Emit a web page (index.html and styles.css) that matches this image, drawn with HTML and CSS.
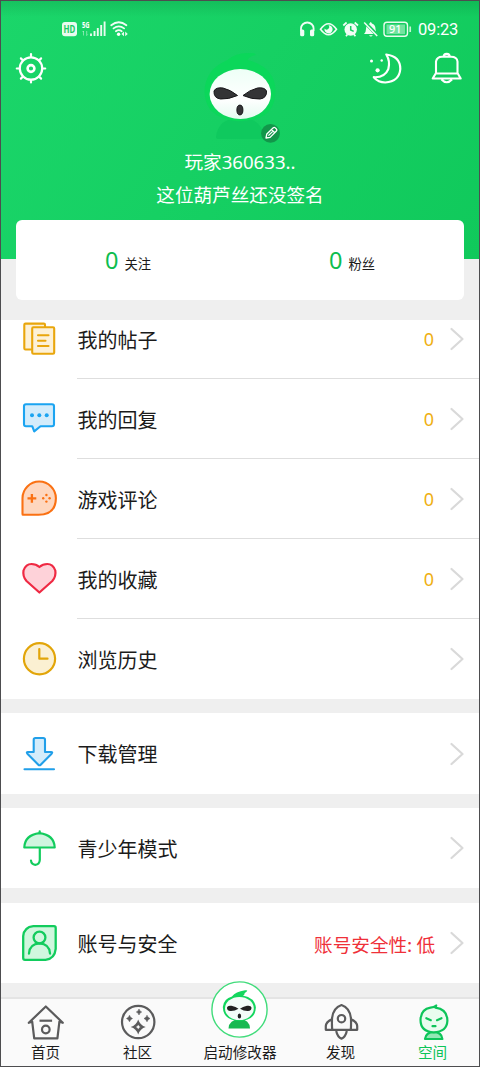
FILE: index.html
```html
<!DOCTYPE html>
<html lang="zh-CN">
<head>
<meta charset="utf-8">
<title>空间</title>
<link rel="stylesheet" href="styles.css">
</head>
<body>
<div class="phone">
  <header class="hero">
    <div class="status">
      <svg class="status-left" width="72" height="22" viewBox="60 18 72 22">
        <rect x="62" y="22" width="15" height="14.300" rx="3" fill="#e9fbef"/>
        <text x="63.600" y="32.800" class="hd" textLength="11.800" lengthAdjust="spacingAndGlyphs">HD</text>
        <text x="82" y="27.600" class="fiveg" textLength="7.600" lengthAdjust="spacingAndGlyphs">5G</text>
        <path d="M83.500 31v4.500m-1-3.500l1-1M86.700 31v4.500l1-1" stroke="#fff" stroke-width=".9" fill="none" opacity=".5"/>
        <path d="M91 33.500V36M94.500 31v5M97.800 28v8M101.200 25v11M104.600 21.500V36" stroke="#e9fbef" stroke-width="1.900" fill="none"/>
        <g fill="none" stroke="#f1fdf5" stroke-width="1.800" stroke-linecap="round"><path d="M111.200 25.200q7.600-6 15.200 0M113.500 28.400q5.300-4 10.600 0M115.900 31.200q2.900-2 5.800 0"/></g>
        <circle cx="118.600" cy="34.200" r="1.700" fill="#fff"/>
        <path d="M124 31.500v4.800l-2.600-2.400zM125.200 31.500v4.800l2.600-2.400z" fill="#e9fbef"/>
      </svg>
      <svg class="status-right" width="116" height="22" viewBox="298 18 116 22">
        <path d="M302 31v-2.500a6.300 6 0 0 1 12.600 0V31" fill="none" stroke="#f1fdf5" stroke-width="1.800"/>
        <rect x="301.100" y="29.500" width="4.200" height="6.800" rx="1.600" fill="#f1fdf5"/><rect x="311" y="29.500" width="4.200" height="6.800" rx="1.600" fill="#f1fdf5"/>
        <path d="M321.500 29.200q8-11 16 0q-8 11-16 0z" fill="none" stroke="#f1fdf5" stroke-width="1.600"/>
        <path d="M329.500 25.200a4.100 4.100 0 1 1-4 3.400a2.400 2.400 0 0 0 4-3.400z" fill="#f1fdf5"/>
        <circle cx="351.700" cy="29.500" r="6.200" fill="#f1fdf5"/>
        <path d="M344.300 25.500l3.300-3M359 25.500l-3.300-3M347 36.300l1.500-2M356.400 36.300l-1.500-2" stroke="#f1fdf5" stroke-width="1.700"/>
        <path d="M351.700 26v4l3 1.400" stroke="#18cf63" stroke-width="1.500" fill="none"/>
        <path d="M365 34q2-2 2-5q0-4.500 3.600-5.500q1.100-3.200 2.300 0q3.600 1 3.600 5.500q0 3 2 5zM370 35.200h3.800q-1.900 2.600-3.800 0z" fill="#f1fdf5"/>
        <path d="M365 21.500l14 14.500" stroke="#18cf63" stroke-width="3.400"/><path d="M365.200 22.500l13 13.500" stroke="#f1fdf5" stroke-width="1.500"/>
        <rect x="385" y="22.300" width="23.500" height="14" rx="3" fill="none" stroke="#e9fbef" stroke-width="1.400"/>
        <rect x="387.500" y="24.500" width="18.500" height="9.600" fill="#73e3a0"/>
        <text x="390" y="33.300" class="battery" textLength="12.500" lengthAdjust="spacingAndGlyphs">91</text>
        <path d="M411.200 26.500v5.500" stroke="#c4f4d6" stroke-width="1.700"/>
      </svg>
      <span class="time">09:23</span>
    </div>
    <div class="topbar">
      <svg width="32" height="34" viewBox="15 51 32 34" fill="none" stroke="#fff" stroke-width="2.200" stroke-linecap="round">
        <circle cx="31" cy="68.500" r="11.200"/><circle cx="31" cy="68.500" r="3.400" stroke-width="2.600"/>
        <path d="M31 57v-3M31 80v2.500M19.500 68.500h-2.700M42.500 68.500h2.700M23 60.500l-2.100-2.100M39 60.500l2.100-2.100M23 76.500l-2.100 2.100M39 76.500l2.100 2.100"/>
      </svg>
      <svg class="avatar" width="80" height="94" viewBox="200 51 80 94">
        <defs><linearGradient id="face" x1="0" y1="0" x2="0" y2="1"><stop offset="0" stop-color="#edfff6"/><stop offset=".6" stop-color="#fff"/><stop offset="1" stop-color="#e4fbf0"/></linearGradient></defs>
        <path d="M216 137q2-19 24-19t24 19q0 2-3 2h-42q-3 0-3-2z" fill="#0fc95e"/>
        <path d="M204.500 91q1-22 23-31q8-7 20-7q10 0 8 2q-6 1-8 5q27 7 28 30q0 24-20 29q-30 7-45-9q-6-8-6-19z" fill="#0bd75a"/>
        <ellipse cx="240.300" cy="94" rx="30.700" ry="25" fill="url(#face)"/>
        <g fill="#343436" stroke="#171719" stroke-width="1"><path d="M214 91q2-4 9-3q8 2 14.500 7.500q-9 4-17 3.500q-7-1-6.500-8z"/><path d="M266.500 91q-2-4-9-3q-8 2-14.500 7.500q9 4 17 3.500q7-1 6.500-8z"/><ellipse cx="239.900" cy="110" rx="3" ry="4.900"/></g>
        <circle cx="270.500" cy="133.400" r="9.400" fill="#12964a"/>
        <path d="M266 138l.8-4 6.500-6.300q1-.8 2 .2l1.100 1.100q1 1 0 2l-6.300 6.400zM271.600 129.600l3.400 3.400M268.400 135.600l4.600-4.500" fill="none" stroke="#fff" stroke-width="1.300" stroke-linejoin="round"/>
      </svg>
      <div class="actions">
        <svg width="36" height="34" viewBox="368 51 36 34"><path d="M386.300 54.500q14 1.700 14 14.500q-1 12.500-15 13.500q-7 0-11.500-5.300q11 .6 14.500-8q2.200-8-2-14.700z" fill="none" stroke="#fff" stroke-width="2.200" stroke-linejoin="round"/><g fill="#fff"><circle cx="371.500" cy="61" r="1.500"/><circle cx="381.700" cy="60.500" r="1.200"/><circle cx="377.600" cy="70.300" r="2.100"/></g></svg>
        <svg width="34" height="34" viewBox="430 51 34 34" fill="none" stroke="#fff" stroke-width="2.100" stroke-linejoin="round"><path d="M436 73V61.500q1-4.700 6-4.700h9q6 0 6.500 4.700V73l3.200 5.500h-28zM435 73.500h23.500M443.700 56.500q0-2.400 3-2.600q3 .2 3 2.600M441.500 79.500q5.200 5.600 10.500 0"/></svg>
      </div>
    </div>
    <div class="name">玩家360633..</div>
    <div class="sign">这位葫芦丝还没签名</div>
  </header>

  <section class="stats">
    <div class="stat"><b>0</b><span>关注</span></div>
    <div class="stat"><b>0</b><span>粉丝</span></div>
  </section>

  <main>
    <section class="group group-first">
      <a class="row"><svg class="icon" viewBox="20 319 40 40" fill="#fdf1d7" stroke="#e9a60c" stroke-width="2.100" stroke-linejoin="round" stroke-linecap="round"><path d="M31 349.500h-5.500q-1.200 0-1.200-1.200v-23.500q0-1.200 1.200-1.200h18.300q1.200 0 1.200 1.200v2.500"/><rect x="32.200" y="327.300" width="22" height="26.500" rx="1.200"/><path d="M38 335.300h10.500M38 340.700h7.500M38 346h10.500"/></svg><span class="label">我的帖子</span><span class="count">0</span><svg class="chev" viewBox="450 327 16 24"><path d="M452.500 329l11 10-11 10"/></svg></a>
      <a class="row"><svg class="icon" viewBox="20 399 40 40" fill="#d3ecfb" stroke="#1ba4f1" stroke-width="2.100" stroke-linejoin="round"><path d="M26 404.200h26q2 0 2 2v18q0 2-2 2H40.500l-6.300 5.200-2-5.200H26q-2 0-2-2v-18q0-2 2-2z"/><g fill="#1ba4f1" stroke="none"><circle cx="32" cy="415.200" r="2"/><circle cx="39.300" cy="415.200" r="2"/><circle cx="46.700" cy="415.200" r="2"/></g></svg><span class="label">我的回复</span><span class="count">0</span><svg class="chev" viewBox="450 327 16 24"><path d="M452.500 329l11 10-11 10"/></svg></a>
      <a class="row"><svg class="icon" viewBox="20 479 40 40" fill="#fed7bf" stroke="#fa7113" stroke-width="2.100" stroke-linejoin="round"><path d="M23 514.800q-.5 0-.5-.8V498.200a16.700 16.700 0 0 1 33.400 0q-.3 16.600-17.400 16.600z"/><path d="M27.500 498.300h8.800M31.900 494v8.700" stroke-width="2.300"/><g fill="#fa7113" stroke="none"><circle cx="46.400" cy="495" r="1.200"/><circle cx="46.400" cy="501.600" r="1.200"/><circle cx="43.200" cy="498.300" r="1.200"/><circle cx="49.600" cy="498.300" r="1.200"/></g></svg><span class="label">游戏评论</span><span class="count">0</span><svg class="chev" viewBox="450 327 16 24"><path d="M452.500 329l11 10-11 10"/></svg></a>
      <a class="row"><svg class="icon" viewBox="20 559 40 40" fill="#fed2d9" stroke="#ef2943" stroke-width="2.200" stroke-linejoin="round"><path d="M39.400 592.500L26.500 581q-4-4.500-3-10.500q2.300-6.500 8-6.500q4.500 0 7.900 3q3.400-3 7.900-3q5.700 0 8 6.500q1 6-3 10.500z"/></svg><span class="label">我的收藏</span><span class="count">0</span><svg class="chev" viewBox="450 327 16 24"><path d="M452.500 329l11 10-11 10"/></svg></a>
      <a class="row"><svg class="icon" viewBox="20 639 40 40" fill="#fbf0d2" stroke="#e2a509" stroke-width="2.200" stroke-linecap="round"><circle cx="39.500" cy="658.700" r="15.600"/><path d="M39.300 649v9.700h8.200" stroke-linejoin="round"/></svg><span class="label">浏览历史</span><svg class="chev" viewBox="450 327 16 24"><path d="M452.500 329l11 10-11 10"/></svg></a>
    </section>
    <section class="group tall">
      <a class="row"><svg class="icon" viewBox="20 733.500 40 40" fill="#d3ecfb" stroke="#219fe9" stroke-width="2.100" stroke-linejoin="round" stroke-linecap="round"><path d="M35.500 737.500h7.700q1.800 0 1.800 1.800v12.200h6q2 0 .6 1.700l-10.900 11q-1.200 1.200-2.400 0l-10.900-11q-1.300-1.700.6-1.700h5.700v-12.200q0-1.800 1.800-1.800zM24.500 768.700H54"/></svg><span class="label">下载管理</span><svg class="chev" viewBox="450 327 16 24"><path d="M452.500 329l11 10-11 10"/></svg></a>
    </section>
    <section class="group">
      <a class="row"><svg class="icon" viewBox="20 828 40 40" fill="none" stroke="#12cc5d" stroke-width="2.200" stroke-linejoin="round" stroke-linecap="round"><path d="M24.300 847.500q.5-12.500 15.200-14.300q14.700 1.800 15.200 14.300z" fill="#cff5df"/><path d="M39.700 833v-1.700M39.800 848v12q-.3 4.500-4.500 4.800q-4-.4-4.300-4.300"/></svg><span class="label">青少年模式</span><svg class="chev" viewBox="450 327 16 24"><path d="M452.500 329l11 10-11 10"/></svg></a>
    </section>
    <section class="group security">
      <a class="row"><svg class="icon" viewBox="20 923 40 40" fill="#d0f7de" stroke="#12cc5d" stroke-width="2.300" stroke-linejoin="round" stroke-linecap="round"><path d="M33.300 926.200H54q1.700 0 1.700 1.700v21q-1 10-10.200 11H25q-1.800 0-1.800-1.800v-22q1-9 10.100-9.900z"/><circle cx="39.500" cy="937.500" r="5.900"/><path d="M29 953.500q.5-9.500 10.500-10.100q10 .6 10.500 10.100" fill="none"/></svg><span class="label">账号与安全</span><span class="warn">账号安全性: 低</span><svg class="chev" viewBox="450 327 16 24"><path d="M452.500 329l11 10-11 10"/></svg></a>
    </section>
  </main>

  <nav class="tabs">
    <a class="tab"><svg width="40" height="40" viewBox="26 1002 40 40" fill="none" stroke="#5b5b5c" stroke-width="2.200" stroke-linejoin="round"><path d="M28.800 1022.800l17-16.300 17 16.300-3.400-1.200-2 16.700H34.200l-2-16.700z"/><path d="M39.500 1020.700h12.600"/><circle cx="45.800" cy="1029.500" r="3.800"/></svg><span>首页</span></a>
    <a class="tab"><svg width="40" height="40" viewBox="117.500 1002 40 40"><circle cx="137.700" cy="1022" r="16.200" fill="none" stroke="#5b5b5c" stroke-width="2.200"/><g fill="#5b5b5c"><path fill-rule="evenodd" d="M137.700 1019.500q2 6 7.500 7.500q-5.500 1.500-7.500 7.500q-2-6-7.500-7.500q5.500-1.500 7.500-7.500zm0 5.200q-.7 1.700-2.300 2.300q1.600.6 2.300 2.300q.7-1.700 2.300-2.300q-1.600-.6-2.300-2.300z"/><path d="M138.500 1009q.6 2.300 2.700 3q-2.100.7-2.700 3q-.6-2.300-2.700-3q2.100-.7 2.700-3zM129 1015.200q.8 2.600 3 3.300q-2.200.7-3 3.300q-.8-2.600-3-3.300q2.200-.7 3-3.300zM146.500 1015.200q.8 2.600 3 3.300q-2.200.7-3 3.300q-.8-2.600-3-3.300q2.200-.7 3-3.300z" stroke="#5b5b5c" stroke-width=".5"/></g></svg><span>社区</span></a>
    <a class="tab launch"><svg width="60" height="60" viewBox="210 980 60 60"><circle cx="239.500" cy="1009.500" r="27.600" fill="#fff" stroke="#41dc7b" stroke-width="1.400"/><path d="M228.500 1028.500q.5-9 11.500-9.500q9.500.5 10 9.500z" fill="#17b951"/><path d="M222.800 1007q1-8.500 9.200-10.500q3.500-5 13-6.300q3.500-.4 1.500 1.500q-2.500 1-2.300 3.300l-1.500.5q12 2 13.200 12q-.5 13-16.500 13.500q-16-.5-16.600-14z" fill="#13d65e"/><ellipse cx="239.400" cy="1008.500" rx="14.400" ry="11.500" fill="#f3fcf8"/><g fill="#222"><path d="M227 1007.500q.5-2.300 4.500-1.700q4.500.8 7 3q-4 2.400-8 2.200q-3.700-.4-3.500-3.500zM251.500 1007.500q-.5-2.300-4.500-1.700q-4.500.8-7 3q4 2.400 8 2.200q3.700-.4 3.500-3.500z"/><ellipse cx="239.400" cy="1016" rx="1.700" ry="2.500"/></g></svg><span>启动修改器</span></a>
    <a class="tab"><svg width="40" height="40" viewBox="320.500 1002 40 40" fill="none" stroke="#5b5b5c" stroke-width="2.200" stroke-linejoin="round"><path d="M331.800 1029.800q-.5-2-.3-11q1-11 9.500-13.800q8.500 2.800 9.500 13.800q.2 9-.3 11zM331.500 1019q-6 3-6.200 7v3.800h6.300M350.500 1019q6 3 6.200 7v3.800h-6.300M335.700 1031q1.300 6 5.300 7.700q4-1.700 5.300-7.700"/><circle cx="341" cy="1018.700" r="3.700"/></svg><span>发现</span></a>
    <a class="tab active"><svg width="40" height="40" viewBox="412.500 1002 40 40" fill="none" stroke="#0dc459" stroke-width="2.200" stroke-linejoin="round" stroke-linecap="round"><path d="M424.500 1039q1-7 8.700-7.200q8 .2 8.700 7.200z" fill="#92e8b5"/><path d="M430 1007.700q3.500-.2 5.700-2.200l-.8 2.200q12 1.500 12 13q-.5 11-13.700 11.600q-13.200-.6-13.200-12.600q.5-10.500 10-12z" fill="#e9fcef"/><path d="M425.800 1018.200l4.500 2M441 1018.200l-4.500 2M432 1026.200h3"/></svg><span>空间</span></a>
  </nav>
</div>
</body>
</html>
```
FILE: styles.css
```css
* { box-sizing: border-box; }
body {
  margin: 0;
  font-family: "Noto Sans CJK SC", "Noto Sans", sans-serif;
  font-weight: 400;
  color: #1b1b1b;
}
svg { display: block; flex: none; }
.phone {
  width: 480px;
  height: 1067px;
  border: 1px solid #4d4d4f;
  background: #efefef;
  display: flex;
  flex-direction: column;
  overflow: hidden;
}
.hero {
  height: 258px;
  flex: none;
  background: linear-gradient(180deg, rgba(0, 70, 30, .14), rgba(0, 70, 30, 0) 16px), linear-gradient(125deg, #1bd66a, #10c95b);
  color: #fff;
}
.status {
  display: flex;
  align-items: center;
  height: 50px;
  padding: 6px 20px 0 59px;
}
.status-right { margin-left: auto; }
.time {
  width: 41px;
  margin-left: 5px;
  padding-top: 2px;
  font: 400 16.500px/22px Roboto, sans-serif;
  letter-spacing: -.2px;
}
.hd, .fiveg { font-family: "Noto Sans", sans-serif; font-weight: 700; }
.battery { font-family: "Noto Sans", sans-serif; font-weight: 500; }
.hd { font-size: 10px; fill: #19ca62; }
.fiveg { font-size: 8px; fill: #fff; }
.battery { font-size: 11px; fill: #fff; }
.topbar {
  display: grid;
  grid-template-columns: 1fr 80px 1fr;
  height: 94px;
  padding: 0 15px 0 14px;
}
.actions { display: flex; justify-content: flex-end; gap: 26px; }
.name, .sign {
  text-align: center;
  font-size: 18.600px;
  line-height: 32px;
}
.name { padding-top: 1px; font-family: "Noto Sans", "Noto Sans CJK SC", sans-serif; }
.stats {
  display: flex;
  flex: none;
  height: 80px;
  margin: -39px 15px 20px;
  border-radius: 6px;
  background: #fff;
}
.stat {
  flex: 1;
  display: flex;
  justify-content: center;
  align-items: baseline;
  gap: 6px;
  padding-top: 22px;
}
.stat b {
  font: 400 23.500px/36px "Noto Sans", sans-serif;
  color: #0dbd4f;
}
.stat span { font-size: 13.300px; }
main { height: 677px; flex: none; }
.group { height: 80px; margin-bottom: 15px; background: #fff; overflow: hidden; }
.group-first { height: 379px; margin-bottom: 14px; }
.group-first .row:first-child { margin-top: -21px; }
.group.tall { height: 81px; margin-bottom: 14px; }
.group.tall .row { height: 81px; }
.group.security { margin-bottom: 14px; }
.row {
  display: flex;
  align-items: center;
  position: relative;
  height: 80px;
  padding: 0 14px 0 19px;
}
.group-first .row:not(:last-child)::after {
  content: "";
  position: absolute;
  left: 76px;
  right: 0;
  bottom: 0;
  border-bottom: 1px solid #dedede;
}
.icon { width: 40px; height: 40px; }
.label { margin-left: 17.500px; padding-top: 1px; flex: 1; font-size: 20px; line-height: 30px; }
.count {
  width: 12px;
  text-align: center;
  font: 400 18px/24px "Noto Sans", sans-serif;
  color: #efb012;
}
.warn { padding-top: 1px; font-size: 18.600px; color: #ef3039; }
.chev {
  width: 16px;
  height: 24px;
  margin-left: 14px;
  fill: none;
  stroke: #d9d9d9;
  stroke-width: 2.200px;
  stroke-linecap: round;
  stroke-linejoin: round;
}
.tabs {
  flex: none;
  height: 70px;
  display: grid;
  grid-template-columns: 89px 95px 110px 91px 93px;
  border-top: 2px solid #e4e4e4;
  background: #fafafa;
}
.tab {
  display: flex;
  flex-direction: column;
  align-items: center;
  padding-top: 3px;
  font-size: 14.600px;
  line-height: 20px;
}
.launch { padding-top: 0; }
.launch svg { margin-top: -19px; }
.launch span { margin-top: 2px; }
.active { color: #0dc459; }
```
